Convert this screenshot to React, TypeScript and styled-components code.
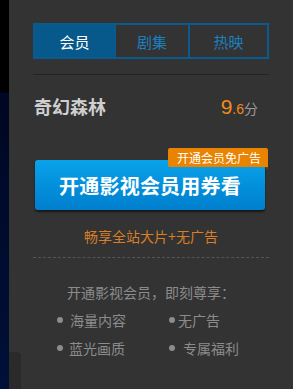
import React from "react";
import styled, { createGlobalStyle } from "styled-components";

const Global = createGlobalStyle`
  html, body { margin: 0; padding: 0; background: #333333; }
  body { font-family: "Noto Sans CJK SC", "Liberation Sans", sans-serif; }
  * { box-sizing: border-box; }
`;

const Page = styled.div`
  display: flex;
  width: 293px;
  height: 389px;
  overflow: hidden;
  background: #333333;
`;

const Strip = styled.div`
  width: 9px;
  flex: none;
  background: linear-gradient(
    to bottom,
    #000000 0px,
    #000000 92px,
    #000623 93px,
    #000c2e 250px,
    #001038 389px
  );
`;

const Panel = styled.div`
  position: relative;
  flex: 1;
  padding: 23px 24px 0 24px;
  display: flex;
  flex-direction: column;
`;

const Corner = styled.div`
  position: absolute;
  left: 0;
  bottom: 0;
  width: 12px;
  height: 37px;
  background: #2a2a2a;
  border-top-right-radius: 6px 3px;
`;

const Tabs = styled.div`
  display: grid;
  grid-template-columns: 79px 1fr 79px;
  height: 36px;
  border: 2px solid #0a5a8e;
`;

const Tab = styled.div<{ $active?: boolean; $first?: boolean }>`
  display: flex;
  align-items: center;
  justify-content: center;
  font-size: 15px;
  color: ${(p) => (p.$active ? "#ffffff" : "#1b7fc0")};
  background: ${(p) => (p.$active ? "#07598c" : "transparent")};
  border-left: ${(p) => (p.$first ? "none" : "2px solid #0a5a8e")};
`;

const Divider = styled.div`
  height: 1px;
  background: #232323;
  margin-top: 15px;
`;

const TitleRow = styled.div`
  display: flex;
  align-items: baseline;
  justify-content: space-between;
  margin-top: 18px;
  padding: 0 11px 0 1px;
  height: 25px;
`;

const Title = styled.div`
  font-size: 18px;
  font-weight: bold;
  color: #cfcfcf;
`;

const Score = styled.div`
  display: flex;
  align-items: baseline;
  font-family: "Liberation Sans", "Noto Sans CJK SC", sans-serif;
`;

const ScoreBig = styled.span`
  font-size: 21px;
  color: #f38a1c;
`;

const ScoreSmall = styled.span`
  font-size: 14px;
  color: #f38a1c;
`;

const ScoreUnit = styled.span`
  font-family: "Noto Sans CJK SC", sans-serif;
  font-size: 14px;
  color: #9a9a9a;
`;

const ButtonWrap = styled.div`
  position: relative;
  margin-top: 30px;
  padding: 12px 4px 0 2px;
`;

const Badge = styled.div`
  position: absolute;
  top: 0;
  right: 1px;
  height: 19px;
  padding: 0 7px 0 9px;
  display: flex;
  align-items: center;
  font-size: 12px;
  color: #ffffff;
  background: #e98300;
  border-radius: 2px 2px 0 2px;
  z-index: 1;
  &::after {
    content: "";
    position: absolute;
    right: 0;
    bottom: -3px;
    border-top: 3px solid #7a4300;
    border-left: 3px solid transparent;
  }
`;

const Button = styled.div`
  height: 50px;
  border-radius: 3px;
  background: linear-gradient(to bottom, #0aa3ea 0%, #0390dc 50%, #007fcd 100%);
  box-shadow: 0 2px 2px rgba(0, 0, 0, 0.55);
  display: flex;
  align-items: center;
  justify-content: center;
  font-size: 20px;
  font-weight: bold;
  color: #ffffff;
  letter-spacing: 0.2px;
`;

const SubText = styled.div`
  margin-top: 15px;
  text-align: center;
  font-size: 14px;
  color: #d77e26;
  line-height: 22px;
`;

const Dashed = styled.div`
  margin-top: 10px;
  height: 0;
  border-top: 1px dashed #555555;
`;

const Heading = styled.div`
  margin-top: 23px;
  text-align: center;
  font-size: 14px;
  color: #8c8c8c;
  line-height: 22px;
`;

const Features = styled.div`
  display: grid;
  grid-template-columns: 112px 1fr;
  row-gap: 6px;
  margin-top: 6px;
  padding-left: 24px;
`;

const Feature = styled.div<{ $gap: number }>`
  display: flex;
  align-items: center;
  gap: ${(p) => p.$gap}px;
  font-size: 14px;
  color: #8c8c8c;
  line-height: 22px;
`;

const Dot = styled.span`
  width: 6px;
  height: 6px;
  border-radius: 50%;
  background: #8c8c8c;
  flex: none;
`;

const features: { text: string; gap: number }[] = [
  { text: "海量内容", gap: 7 },
  { text: "无广告", gap: 3 },
  { text: "蓝光画质", gap: 6 },
  { text: "专属福利", gap: 8 },
];

export default function App() {
  return (
    <>
      <Global />
      <Page>
        <Strip />
        <Panel>
          <Tabs>
            <Tab $active $first>会员</Tab>
            <Tab>剧集</Tab>
            <Tab>热映</Tab>
          </Tabs>
          <Divider />
          <TitleRow>
            <Title>奇幻森林</Title>
            <Score>
              <ScoreBig>9</ScoreBig>
              <ScoreSmall>.6</ScoreSmall>
              <ScoreUnit>分</ScoreUnit>
            </Score>
          </TitleRow>
          <ButtonWrap>
            <Badge>开通会员免广告</Badge>
            <Button>开通影视会员用券看</Button>
          </ButtonWrap>
          <SubText>畅享全站大片+无广告</SubText>
          <Dashed />
          <Heading>开通影视会员，即刻尊享：</Heading>
          <Features>
            {features.map((f) => (
              <Feature key={f.text} $gap={f.gap}>
                <Dot />
                {f.text}
              </Feature>
            ))}
          </Features>
          <Corner />
        </Panel>
      </Page>
    </>
  );
}
